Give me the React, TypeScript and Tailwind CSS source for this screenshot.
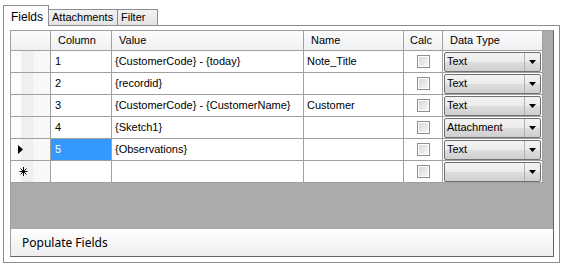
const rows = [
  { n: '1', value: '{CustomerCode} - {today}', name: 'Note_Title', type: 'Text' },
  { n: '2', value: '{recordid}', name: '', type: 'Text' },
  { n: '3', value: '{CustomerCode} - {CustomerName}', name: 'Customer', type: 'Text' },
  { n: '4', value: '{Sketch1}', name: '', type: 'Attachment' },
  { n: '5', value: '{Observations}', name: '', type: 'Text', current: true },
  { n: '', value: '', name: '', type: '', isNew: true },
];

const cell = 'h-[22px] border-r border-b border-[#a0a0a0] flex items-center';
const headCell =
  'h-[20px] border-r border-b border-[#a0a0a0] flex items-center bg-[linear-gradient(to_bottom,#fbfbfc,#eff0f2)]';
const rowHead =
  'bg-[linear-gradient(to_right,#fcfcfc_0%,#fcfcfc_24%,#efefef_28%,#efefef_55%,#f8f8f8_60%,#f8f8f8_100%)]';

function CheckBox() {
  return (
    <div className="w-[13px] h-[13px] border border-[#8f8f8f] p-px bg-white">
      <div className="w-full h-full bg-[linear-gradient(135deg,#d8d8d8,#f6f6f6)]" />
    </div>
  );
}

function Combo({ label }: { label: string }) {
  return (
    <div className="mx-px w-[98px] h-[20px] border border-[#707070] rounded-[2px] flex bg-[linear-gradient(to_bottom,#f3f3f3_0%,#ebebeb_50%,#dddddd_51%,#cfcfcf_100%)]">
      <div className="flex-1 flex items-center pl-[2px] text-black">{label}</div>
      <div className="w-[16px] border-l border-[#b0b0b0] flex items-center justify-center">
        <svg width="7" height="4" viewBox="0 0 7 4">
          <path d="M0 0h7L3.5 4z" fill="#000" />
        </svg>
      </div>
    </div>
  );
}

export default function App() {
  return (
    <div className="w-[564px] h-[268px] bg-white text-[11px] text-black font-['Liberation_Sans',Arial,sans-serif] overflow-hidden">
      {/* Tabs */}
      <div className="h-[25px] flex items-end pl-[3px]">
        <div className="relative z-10 -mb-px h-[21px] w-[46px] border border-b-0 border-[#898c95] bg-white pl-[7px] pt-[2px] text-[12px]">
          Fields
        </div>
        <div className="h-[16px] w-[69px] border-t border-r border-[#898c95] bg-[linear-gradient(to_bottom,#f2f2f2,#e3e3e3)] flex items-center pl-[3px]">
          Attachments
        </div>
        <div className="h-[16px] w-[40px] border-t border-r border-[#898c95] bg-[linear-gradient(to_bottom,#f2f2f2,#e3e3e3)] flex items-center pl-[3px]">
          Filter
        </div>
      </div>

      {/* Tab page */}
      <div className="ml-[3px] w-[557px] h-[238px] border border-[#898c95] pl-[6px] pt-[4px]">
        <div className="w-[544px] h-[227px] border-l border-t border-[#a0a0a0] border-r border-b border-r-[#646464] border-b-[#646464] flex flex-col">
          <div className="flex-1 bg-[#ababab]">
            {/* Header */}
            <div className="flex">
              <div className={`${headCell} w-[40px]`} />
              <div className={`${headCell} w-[61px] pl-[7px]`}>Column</div>
              <div className={`${headCell} w-[192px] pl-[7px]`}>Value</div>
              <div className={`${headCell} w-[100px] pl-[7px]`}>Name</div>
              <div className={`${headCell} w-[39px] pl-[6px]`}>Calc</div>
              <div className={`${headCell} w-[100px] pl-[7px]`}>Data Type</div>
            </div>
            {rows.map((r, i) => (
              <div key={i} className="flex bg-white w-[532px]">
                <div className={`${cell} ${rowHead} w-[40px] pl-[7px]`}>
                  {r.current && (
                    <svg width="5" height="9" viewBox="0 0 5 9">
                      <path d="M0 0l5 4.5L0 9z" fill="#000" />
                    </svg>
                  )}
                  {r.isNew && (
                    <svg width="9" height="9" viewBox="0 0 9 9" className="ml-[1px]">
                      <path
                        d="M4.5 0v9M0.5 4.5h8M1.5 1.5l6 6M7.5 1.5l-6 6"
                        stroke="#000"
                        strokeWidth="1"
                      />
                    </svg>
                  )}
                </div>
                <div
                  className={`${cell} w-[61px] pl-[4px] ${r.current ? 'bg-[#3399ff] text-white' : ''}`}
                >
                  {r.n}
                </div>
                <div className={`${cell} w-[192px] pl-[3px]`}>{r.value}</div>
                <div className={`${cell} w-[100px] pl-[3px]`}>{r.name}</div>
                <div className={`${cell} w-[39px] justify-center`}>
                  <CheckBox />
                </div>
                <div className={`${cell} w-[100px]`}>
                  <Combo label={r.type} />
                </div>
              </div>
            ))}
          </div>
          <div className="h-[27px] shrink-0 bg-[linear-gradient(to_bottom,#fdfdfd,#efefef)] flex items-center pl-[11px] text-[12px] font-['Noto_Sans',sans-serif]">
            Populate Fields
          </div>
        </div>
      </div>
    </div>
  );
}
